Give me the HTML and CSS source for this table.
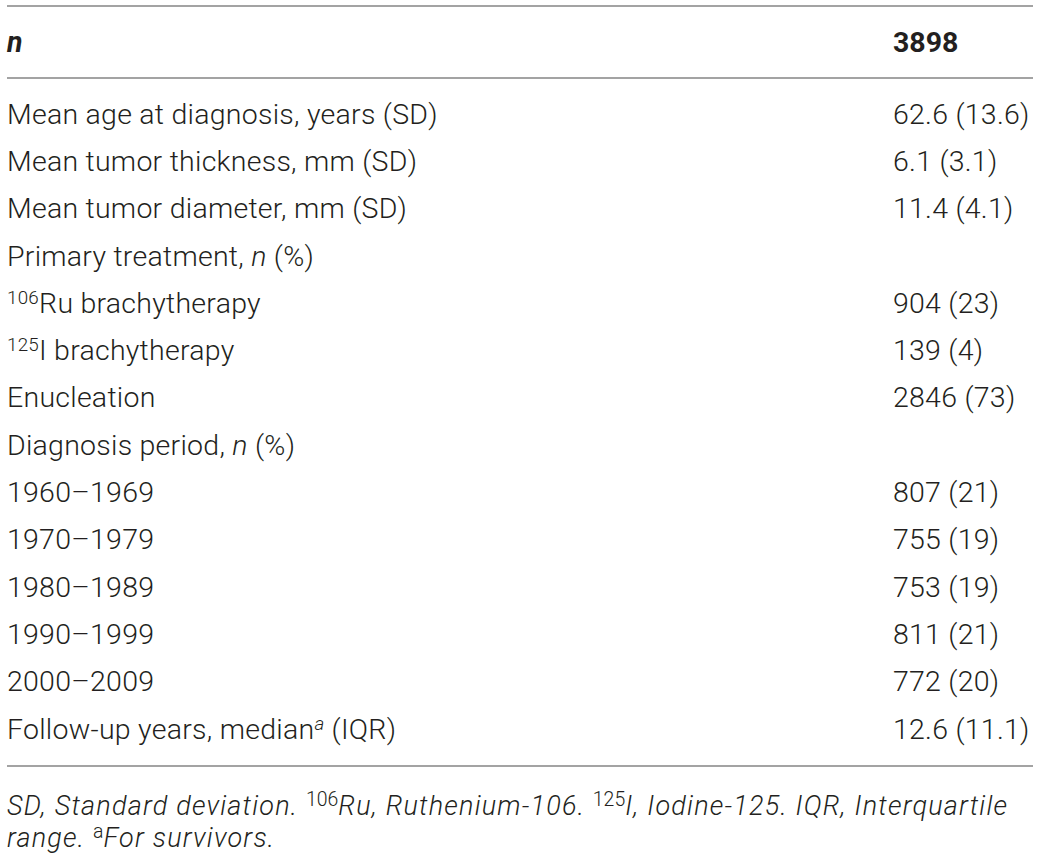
FILE: index.html
```html
<!DOCTYPE html>
<html lang="en">
<head>
<meta charset="utf-8">
<link rel="stylesheet" href="styles.css">
</head>
<body>
<div class="page">
  <table class="data">
    <thead>
      <tr><th class="label"><i>n</i></th><th class="val">3898</th></tr>
    </thead>
    <tbody>
      <tr class="first"><td class="label">Mean age at diagnosis, years (SD)</td><td class="val">62.6 (13.6)</td></tr>
      <tr><td class="label">Mean tumor thickness, mm (SD)</td><td class="val">6.1 (3.1)</td></tr>
      <tr><td class="label">Mean tumor diameter, mm (SD)</td><td class="val">11.4 (4.1)</td></tr>
      <tr><td class="label">Primary treatment, <i>n</i> (%)</td><td class="val"></td></tr>
      <tr><td class="label"><sup>106</sup>Ru brachytherapy</td><td class="val">904 (23)</td></tr>
      <tr><td class="label"><sup>125</sup>I brachytherapy</td><td class="val">139 (4)</td></tr>
      <tr><td class="label">Enucleation</td><td class="val">2846 (73)</td></tr>
      <tr><td class="label">Diagnosis period, <i>n</i> (%)</td><td class="val"></td></tr>
      <tr><td class="label">1960–1969</td><td class="val">807 (21)</td></tr>
      <tr><td class="label">1970–1979</td><td class="val">755 (19)</td></tr>
      <tr><td class="label">1980–1989</td><td class="val">753 (19)</td></tr>
      <tr><td class="label">1990–1999</td><td class="val">811 (21)</td></tr>
      <tr><td class="label">2000–2009</td><td class="val">772 (20)</td></tr>
      <tr class="last"><td class="label">Follow-up years, median<sup><i>a</i></sup> (IQR)</td><td class="val">12.6 (11.1)</td></tr>
    </tbody>
  </table>
  <p class="note">SD, Standard deviation. <sup class="up">106</sup>Ru, Ruthenium-106. <sup class="up">125</sup>I, Iodine-125. IQR, Interquartile range. <sup class="up">a</sup>For survivors.</p>
</div>
</body>
</html>
```

FILE: styles.css
```css
html, body {
  margin: 0;
  padding: 0;
  background: #ffffff;
}

.page {
  padding: 5px 7px 0 7px;
  font-family: Roboto, "Liberation Sans", Arial, sans-serif;
  font-weight: 300;
  color: #231f20;
}

.data {
  width: 1026px;
  border-collapse: collapse;
  font-size: 28.5px;
  letter-spacing: 0.25px;
}

.data thead tr {
  border-top: 2px solid #a3a3a3;
  border-bottom: 2px solid #a3a3a3;
}

.data th {
  height: 70px;
  padding: 0;
  text-align: left;
  font-weight: 700;
  letter-spacing: 0;
  vertical-align: middle;
}

.data td {
  height: 47.3px;
  padding: 0;
  vertical-align: middle;
  line-height: 30px;
}

.data tbody tr.first td {
  padding-top: 12px;
}

.data tbody tr.last td {
  padding-bottom: 12px;
}

.data tbody {
  border-bottom: 2px solid #a3a3a3;
}

.data .val {
  width: 140px;
  text-align: left;
}

.data sup {
  font-size: 0.66em;
  line-height: 0;
  vertical-align: 0.5em;
}

.note {
  margin: 23px 0 0 0;
  font-size: 27px;
  line-height: 32px;
  letter-spacing: 1.2px;
  font-style: italic;
}

.note .up {
  font-style: normal;
  font-size: 0.72em;
  letter-spacing: 0;
  line-height: 0;
  vertical-align: 0.45em;
}
```
